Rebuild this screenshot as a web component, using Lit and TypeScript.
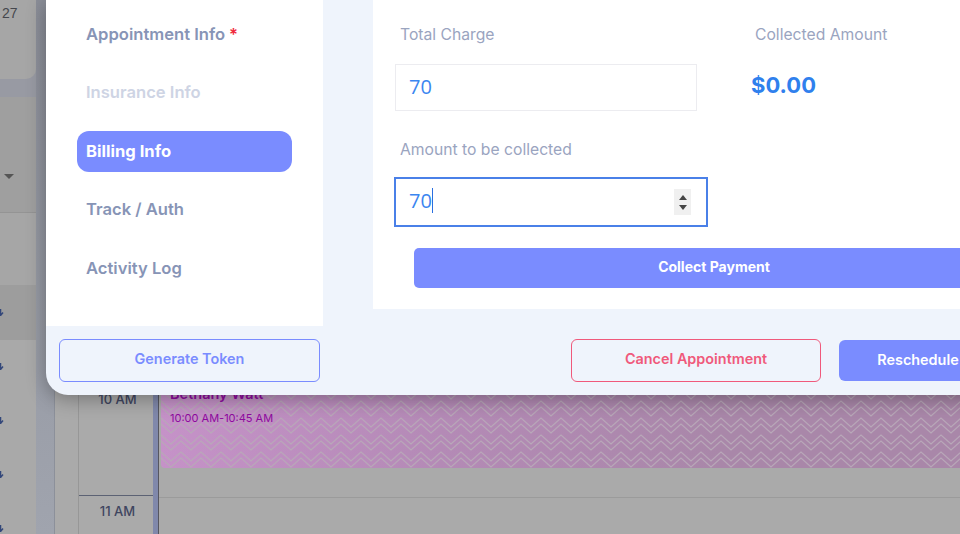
import { LitElement, css, html, svg } from 'lit';
import { customElement } from 'lit/decorators.js';

const NAV = [
  { label: 'Appointment Info', required: true },
  { label: 'Insurance Info', disabled: true },
  { label: 'Billing Info', active: true },
  { label: 'Track / Auth' },
  { label: 'Activity Log' },
];

const ARROWS = [313, 367, 421, 475, 529];

const chevrons = svg`
  <defs>
    <pattern id="zig" width="20" height="17" patternUnits="userSpaceOnUse">
      <path d="M-10 10 L0 1 L10 10 L20 1 L30 10" fill="none" stroke="#b8a8b8" stroke-width="1.2"/>
      <path d="M-10 16 L0 7 L10 16 L20 7 L30 16" fill="none" stroke="#b8a8b8" stroke-width="1.2"/>
    </pattern>
  </defs>
  <rect width="100%" height="100%" fill="url(#zig)"/>
`;

@customElement('app-root')
export class AppRoot extends LitElement {
  static styles = css`
    :host {
      display: block;
      position: relative;
      width: 960px;
      height: 534px;
      overflow: hidden;
      font-family: Inter, 'Noto Sans', sans-serif;
      background: #a0a4ae;
    }

    .backdrop {
      display: flex;
      height: 534px;
    }

    /* left column behind the modal */
    .side {
      position: relative;
      width: 36px;
      flex: none;
      display: flex;
      flex-direction: column;
      gap: 18px;
      background: #989aa3;
    }
    .card {
      background: #a9a9a9;
    }
    .card-top {
      height: 79px;
      border-bottom-right-radius: 10px;
      padding: 5px 0 0 2px;
      box-sizing: border-box;
      font: 14px 'Liberation Sans', sans-serif;
      color: #45474d;
      background: #a6a6a6;
    }
    .card-main {
      flex: 1;
      border-top-right-radius: 10px;
      display: flex;
      flex-direction: column;
    }
    .filter {
      height: 115px;
      flex: none;
      border-bottom: 1px solid #949494;
      background: #9f9f9f;
      position: relative;
    }
    .caret {
      position: absolute;
      left: 4px;
      top: 77px;
      width: 0;
      height: 0;
      border-left: 5px solid transparent;
      border-right: 5px solid transparent;
      border-top: 5px solid #555;
    }
    .row-a { height: 72px; flex: none; background: #a6a6a6; }
    .row-b { height: 55px; flex: none; background: #9d9d9d; }
    .arrow {
      position: absolute;
      left: 0;
      width: 4px;
      height: 7px;
    }

    .gutter {
      width: 18px;
      flex: none;
      background: linear-gradient(#8b8e98, #a0a4ae);
    }

    /* calendar */
    .calendar {
      flex: 1;
      display: flex;
      border-left: 1px solid #8c909a;
      background: #aaaaaa;
    }
    .rail {
      width: 23px;
      flex: none;
      border-right: 1px solid #979797;
    }
    .times {
      width: 74px;
      flex: none;
      padding-top: 384px;
      box-sizing: border-box;
    }
    .slot {
      height: 112px;
      box-sizing: border-box;
      border-bottom: 1px solid #5c6274;
      padding: 7px 0 0 3px;
      text-align: center;
      font-size: 13px;
      font-weight: 500;
      line-height: 16px;
      color: #3f4560;
    }
    .stripe {
      width: 5px;
      flex: none;
      background: #8088ab;
      border-right: 1px solid #565660;
    }
    .grid {
      flex: 1;
      padding: 383px 0 0 2px;
      min-width: 0;
    }
    .event {
      position: relative;
      height: 85px;
      box-sizing: border-box;
      padding: 3px 9px;
      background: linear-gradient(90deg, #c592c8, #b48ab6 35%, #a987a9 70%);
      border-bottom-left-radius: 4px;
      overflow: hidden;
      color: #8f0a9f;
    }
    .event svg {
      position: absolute;
      inset: 0;
      width: 100%;
      height: 100%;
    }
    .event-name,
    .event-time {
      position: relative;
    }
    .event-name {
      font-size: 14.5px;
      font-weight: 600;
      line-height: 16px;
    }
    .event-time {
      margin-top: 9px;
      font-size: 11px;
      font-weight: 400;
      line-height: 14px;
    }
    .grid-line {
      height: 29px;
      margin-left: -2px;
      border-bottom: 1px solid #9b9b9b;
    }

    /* modal */
    .modal {
      position: absolute;
      left: 46px;
      top: 0;
      width: 1011px;
      height: 395px;
      display: flex;
      flex-direction: column;
      background: #eff4fc;
      border-bottom-left-radius: 22px;
      box-shadow: 0 4px 20px rgba(0, 0, 0, 0.32);
    }
    .modal-body {
      display: flex;
      align-items: flex-start;
      gap: 50px;
      height: 326px;
      flex: none;
    }
    .nav {
      width: 277px;
      height: 326px;
      flex: none;
      box-sizing: border-box;
      background: #fff;
      padding: 14px 0 0 31px;
      display: flex;
      flex-direction: column;
      gap: 17.5px;
    }
    .nav-item {
      width: 215px;
      height: 41px;
      box-sizing: border-box;
      padding: 0 0 2px 9px;
      border-radius: 12px;
      display: flex;
      align-items: center;
      gap: 4px;
      font-size: 16.6px;
      font-weight: 600;
      color: #8794b6;
    }
    .nav-item.disabled { color: #ced4e4; }
    .nav-item.active { background: #7a8cff; color: #fff; font-weight: 700; }
    .req { color: #f02a3c; }

    .content {
      flex: 1;
      height: 309px;
      box-sizing: border-box;
      background: #fff;
      padding: 26px 0 0 22px;
    }
    .fields {
      display: grid;
      grid-template-columns: 302px auto;
      column-gap: 54px;
      justify-content: start;
    }
    .label {
      padding-left: 5px;
      font-size: 15.7px;
      line-height: 18px;
      color: #9aa4bf;
    }
    .label.right { padding-left: 4px; }
    .input {
      margin-top: 20px;
      height: 47px;
      box-sizing: border-box;
      border: 1px solid #ececf0;
      padding: 0 0 2px 13px;
      display: flex;
      align-items: center;
      font: 20px 'Open Sans', sans-serif;
      color: #3b86f0;
    }
    .amount {
      margin-top: 25px;
      font-size: 22px;
      font-weight: 700;
      line-height: 32px;
      color: #2f80ed;
    }
    .second {
      margin-top: 30px;
    }
    .input.focus {
      margin: 18px 0 0 -1px;
      width: 314px;
      height: 50px;
      border: 2px solid #4a80e8;
      padding: 0 15px 3px 13px;
    }
    .caret-bar {
      width: 1px;
      height: 25px;
      background: #2a6fe0;
    }
    .spin {
      margin: 3px 0 0 auto;
      width: 17px;
      height: 26px;
      background: #f0f0f0;
      display: flex;
      flex-direction: column;
      align-items: center;
      justify-content: center;
      gap: 5px;
    }
    .spin i {
      width: 0;
      height: 0;
      border-left: 4px solid transparent;
      border-right: 4px solid transparent;
    }
    .spin .up { border-bottom: 5px solid #444; }
    .spin .down { border-top: 5px solid #444; }

    .collect {
      margin: 21px 0 0 19px;
      width: 600px;
      height: 40px;
      box-sizing: border-box;
      padding-bottom: 3px;
      border-radius: 5px;
      background: #7a8cff;
      color: #fff;
      font-size: 14px;
      font-weight: 700;
      display: flex;
      align-items: center;
      justify-content: center;
    }

    .footer {
      flex: 1;
      display: flex;
      align-items: flex-start;
      padding: 13px 0 0 13px;
    }
    .btn {
      height: 43px;
      box-sizing: border-box;
      border-radius: 6px;
      display: flex;
      align-items: center;
      justify-content: center;
      padding-bottom: 4px;
      font-size: 14.4px;
      font-weight: 600;
    }
    .btn-token {
      width: 261px;
      border: 1px solid #7a8cff;
      color: #7a8cff;
    }
    .btn-cancel {
      width: 250px;
      margin-left: 251px;
      border: 1px solid #f0597b;
      color: #f0597b;
    }
    .btn-resched {
      width: 158px;
      height: 41px;
      margin: 1px 0 0 18px;
      padding-bottom: 3px;
      background: #7a8cff;
      color: #fff;
    }
  `;

  render() {
    return html`
      <div class="backdrop">
        <div class="side">
          <div class="card card-top">27</div>
          <div class="card card-main">
            <div class="filter"><span class="caret"></span></div>
            <div class="row-a"></div>
            <div class="row-b"></div>
          </div>
          ${ARROWS.map(
            (y) => html`
              <svg class="arrow" style="top:${y - 4}px" viewBox="0 0 4 7">
                <path d="M0.5 0V6 M-2 3.5 L0.5 6.5 L3 3.5" fill="none" stroke="#33477a" stroke-width="1.5"/>
              </svg>
            `
          )}
        </div>
        <div class="gutter"></div>
        <div class="calendar">
          <div class="rail"></div>
          <div class="times">
            <div class="slot">10 AM</div>
            <div class="slot">11 AM</div>
          </div>
          <div class="stripe"></div>
          <div class="grid">
            <div class="event">
              <svg>${chevrons}</svg>
              <div class="event-name">Bethany Watt</div>
              <div class="event-time">10:00 AM-10:45 AM</div>
            </div>
            <div class="grid-line"></div>
          </div>
        </div>
      </div>

      <div class="modal">
        <div class="modal-body">
          <div class="nav">
            ${NAV.map(
              (n) => html`
                <div class="nav-item ${n.active ? 'active' : ''} ${n.disabled ? 'disabled' : ''}">
                  ${n.label}${n.required ? html`<span class="req">*</span>` : ''}
                </div>
              `
            )}
          </div>
          <div class="content">
            <div class="fields">
              <div>
                <div class="label">Total Charge</div>
                <div class="input">70</div>
              </div>
              <div>
                <div class="label right">Collected Amount</div>
                <div class="amount">$0.00</div>
              </div>
            </div>
            <div class="second">
              <div class="label">Amount to be collected</div>
              <div class="input focus">
                70<span class="caret-bar"></span>
                <span class="spin"><i class="up"></i><i class="down"></i></span>
              </div>
            </div>
            <div class="collect">Collect Payment</div>
          </div>
        </div>
        <div class="footer">
          <div class="btn btn-token">Generate Token</div>
          <div class="btn btn-cancel">Cancel Appointment</div>
          <div class="btn btn-resched">Reschedule</div>
        </div>
      </div>
    `;
  }
}
